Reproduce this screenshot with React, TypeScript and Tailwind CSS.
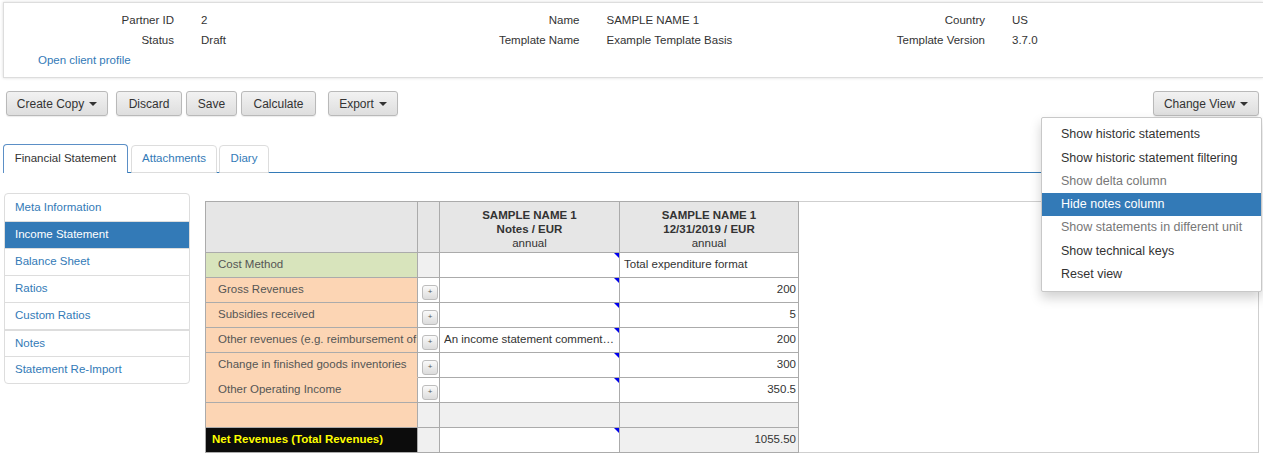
const LINK = 'text-[#337ab7]';

function Caret() {
  return (
    <span className="ml-[5px] inline-block h-0 w-0 border-x-[4px] border-t-[4px] border-x-transparent border-t-[#333]" />
  );
}

function Btn({ label, w, caret }: { label: string; w: string; caret?: boolean }) {
  return (
    <button
      className={`${w} flex h-[25px] items-center justify-center rounded-[3px] border border-[#b9b9b9] bg-gradient-to-b from-[#f2f2f2] to-[#dedede] text-[12px] text-[#333] shadow-[0_1px_1px_rgba(0,0,0,0.08)]`}
    >
      {label}
      {caret && <Caret />}
    </button>
  );
}

function InfoRow({ label, value }: { label: string; value: string }) {
  return (
    <div className="flex h-[20px] w-[405.5px] items-center">
      <span className="w-[170px] text-right">{label}</span>
      <span className="ml-[27px]">{value}</span>
    </div>
  );
}

const sideItems = [
  'Meta Information',
  'Income Statement',
  'Balance Sheet',
  'Ratios',
  'Custom Ratios',
  'Notes',
  'Statement Re-Import',
];

const menuItems = [
  { label: 'Show historic statements' },
  { label: 'Show historic statement filtering' },
  { label: 'Show delta column', muted: true },
  { label: 'Hide notes column', active: true },
  { label: 'Show statements in different unit', muted: true },
  { label: 'Show technical keys' },
  { label: 'Reset view' },
];

type Row = {
  label: string;
  tone: 'green' | 'peach' | 'black';
  btn?: boolean;
  note?: string;
  value?: string;
  left?: boolean;
  grayNote?: boolean;
  grayValue?: boolean;
  joinBelow?: boolean;
  noMark?: boolean;
};

const rows: Row[] = [
  { label: 'Cost Method', tone: 'green', value: 'Total expenditure format', left: true },
  { label: 'Gross Revenues', tone: 'peach', btn: true, value: '200' },
  { label: 'Subsidies received', tone: 'peach', btn: true, value: '5' },
  {
    label: 'Other revenues (e.g. reimbursement of costs)',
    tone: 'peach',
    btn: true,
    note: 'An income statement comment…',
    value: '200',
  },
  { label: 'Change in finished goods inventories', tone: 'peach', btn: true, value: '300', joinBelow: true },
  { label: 'Other Operating Income', tone: 'peach', btn: true, value: '350.5' },
  { label: '', tone: 'peach', grayNote: true, grayValue: true, noMark: true },
  { label: 'Net Revenues (Total Revenues)', tone: 'black', value: '1055.50', grayValue: true },
];

const toneCls = {
  green: 'bg-[#d8e4bc] text-[#555] pl-[12px]',
  peach: 'bg-[#fcd5b4] text-[#555] pl-[12px]',
  black: 'bg-[#0c0c0c] text-[#ffff00] font-bold pl-[6px]',
};

const cell = 'border-r border-b border-[#ababab]';

function StatementTable() {
  return (
    <table className="-ml-px -mt-px w-[593px] table-fixed border-separate border-spacing-0 border-l border-t border-[#ababab]">
      <colgroup>
        <col className="w-[212px]" />
        <col className="w-[22px]" />
        <col className="w-[180px]" />
        <col className="w-[179px]" />
      </colgroup>
      <thead>
        <tr className="h-[51px] bg-[#e6e6e6] text-center leading-[14px]">
          <th className={cell} />
          <th className={cell} />
          <th className={`${cell} pt-[3px]`}>
            <div className="font-bold">SAMPLE NAME 1</div>
            <div className="font-bold">Notes / EUR</div>
            <div className="font-normal">annual</div>
          </th>
          <th className={`${cell} pt-[3px]`}>
            <div className="font-bold">SAMPLE NAME 1</div>
            <div className="font-bold">12/31/2019 / EUR</div>
            <div className="font-normal">annual</div>
          </th>
        </tr>
      </thead>
      <tbody>
        {rows.map((r, i) => (
          <tr key={i} className="h-[25px]">
            <td
              className={`${toneCls[r.tone]} border-r border-b border-[#ababab] ${r.joinBelow ? 'border-b-[#fcd5b4]' : ''}`}
            >
              <div className="overflow-hidden whitespace-nowrap">{r.label}</div>
            </td>
            <td className={`${cell} ${r.btn ? 'bg-white' : 'bg-[#f0f0f0]'} pl-[4px] pt-[4px] align-middle`}>
              {r.btn && (
                <div className="flex h-[15px] w-[16px] items-center justify-center rounded-[3px] border border-[#bdbdbd] bg-gradient-to-b from-[#fafafa] to-[#dcdcdc] text-[8px] leading-none text-[#555]">
                  +
                </div>
              )}
            </td>
            <td className={`${cell} relative ${r.grayNote ? 'bg-[#f0f0f0]' : 'bg-white'} pl-[4px] pr-[2px]`}>
              {!r.noMark && (
                <span className="absolute right-0 top-0 h-0 w-0 border-l-[5px] border-t-[5px] border-l-transparent border-t-[#0000ee]" />
              )}
              <div className="overflow-hidden whitespace-nowrap">{r.note}</div>
            </td>
            <td
              className={`${cell} ${r.grayValue ? 'bg-[#f0f0f0]' : 'bg-white'} ${r.left ? 'pl-[4px] text-left' : 'pr-[2px] text-right'} whitespace-nowrap`}
            >
              {r.value}
            </td>
          </tr>
        ))}
      </tbody>
    </table>
  );
}

export default function App() {
  return (
    <div className="relative h-[456px] w-[1263px] overflow-hidden bg-white font-['Liberation_Sans',Arial,sans-serif] text-[11.5px] text-[#333]">
      {/* client header */}
      <div className="ml-[3px] mt-[2px] h-[76px] border border-r-0 border-[#ddd] bg-white pt-[8px] shadow-[0_0_3px_rgba(0,0,0,0.15)]">
        <div className="flex">
          <InfoRow label="Partner ID" value="2" />
          <InfoRow label="Name" value="SAMPLE NAME 1" />
          <InfoRow label="Country" value="US" />
        </div>
        <div className="flex">
          <InfoRow label="Status" value="Draft" />
          <InfoRow label="Template Name" value="Example Template Basis" />
          <InfoRow label="Template Version" value="3.7.0" />
        </div>
        <div className="flex h-[20px] items-center pl-[34px]">
          <span className={LINK}>Open client profile</span>
        </div>
      </div>

      {/* toolbar */}
      <div className="mt-[13px] flex items-center justify-between pl-[6px] pr-[4px]">
        <div className="flex items-center">
          <Btn label="Create Copy" w="w-[102px]" caret />
          <div className="ml-[8px] flex gap-[4px]">
            <Btn label="Discard" w="w-[66px]" />
            <Btn label="Save" w="w-[51px]" />
            <Btn label="Calculate" w="w-[75px]" />
          </div>
          <div className="ml-[12px]">
            <Btn label="Export" w="w-[70px]" caret />
          </div>
        </div>
        <Btn label="Change View" w="w-[106px]" caret />
      </div>

      {/* tabs */}
      <div className="ml-[3px] mr-[3px] mt-[28px] flex h-[29px] items-end border-b border-[#337ab7]">
        <div className="-mb-px flex h-[29px] w-[125px] items-center justify-center rounded-t-[4px] border border-b-0 border-[#5b8fc6] bg-white">
          Financial Statement
        </div>
        <div className={`-mb-px ml-[3px] flex h-[28px] w-[86px] items-center justify-center rounded-t-[4px] border border-[#ddd] ${LINK}`}>
          Attachments
        </div>
        <div className={`-mb-px ml-[2px] flex h-[28px] w-[50px] items-center justify-center rounded-t-[4px] border border-[#ddd] ${LINK}`}>
          Diary
        </div>
      </div>

      {/* content */}
      <div className="flex">
        <div className="ml-[4px] mt-[20px] w-[186px]">
          <div className="overflow-hidden rounded-[4px] border border-[#ddd]">
            {sideItems.map((s, i) => (
              <div
                key={s}
                className={`flex h-[27px] items-center pl-[10px] ${i > 0 ? (s === 'Notes' ? 'border-t-2 border-[#ddd]' : 'border-t border-[#ddd]') : ''} ${
                  s === 'Income Statement' ? 'bg-[#337ab7] text-white' : LINK
                }`}
              >
                {s}
              </div>
            ))}
          </div>
        </div>

        <div className="ml-[15px] mt-[28px] h-[252px] w-[1054px] border border-[#cfcfcf]">
          <StatementTable />
        </div>
      </div>

      {/* change view menu */}
      <div className="absolute left-[1041px] top-[117px] w-[221px] rounded-[2px] border border-[#c8c8c8] bg-white py-[5px] text-[12.5px] shadow-[0_6px_12px_rgba(0,0,0,0.18)]">
        {menuItems.map((m) => (
          <div
            key={m.label}
            className={`flex h-[23.3px] items-center whitespace-nowrap pl-[19px] ${
              m.active ? 'bg-[#337ab7] text-white' : m.muted ? 'text-[#777]' : 'text-[#333]'
            }`}
          >
            {m.label}
          </div>
        ))}
      </div>
    </div>
  );
}
